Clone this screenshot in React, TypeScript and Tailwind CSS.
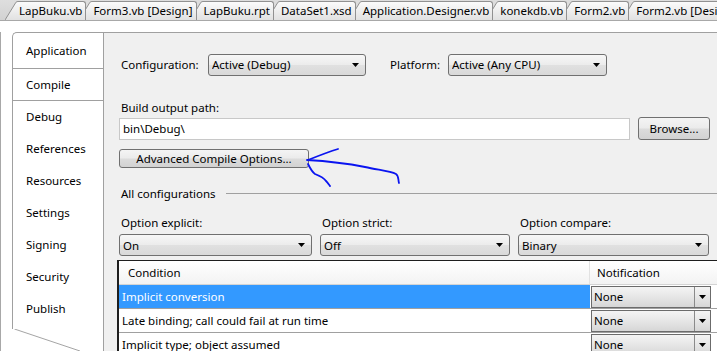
import React from 'react';

const docTabs = [
  'LapBuku.vb',
  'Form3.vb [Design]',
  'LapBuku.rpt',
  'DataSet1.xsd',
  'Application.Designer.vb',
  'konekdb.vb',
  'Form2.vb',
  'Form2.vb [Design]',
];

const sideTabs = ['Debug', 'References', 'Resources', 'Settings', 'Signing', 'Security', 'Publish'];

const rows = [
  { condition: 'Implicit conversion', selected: true },
  { condition: 'Late binding; call could fail at run time', selected: false },
  { condition: 'Implicit type; object assumed', selected: false },
];

function Arrow() {
  return (
    <svg width="7" height="4" viewBox="0 0 7 4" className="shrink-0">
      <path d="M0 0 H7 L3.5 4 Z" fill="#000" />
    </svg>
  );
}

function DocTab({ label, index }: { label: string; index: number }) {
  return (
    <div
      className={`relative flex h-[19px] shrink-0 ${index === 0 ? 'ml-[5px]' : '-ml-[7px]'}`}
      style={{ zIndex: 20 - index }}
    >
      <svg width="13" height="19" viewBox="0 0 13 19" className="shrink-0">
        <defs>
          <linearGradient id={`tg${index}`} x1="0" y1="0" x2="0" y2="1">
            <stop offset="0" stopColor="#fbfbfb" />
            <stop offset="1" stopColor="#e1e1e1" />
          </linearGradient>
        </defs>
        <path d="M0 19 L11 1.2 Q11.8 0.5 13 0.5 V19 Z" fill={`url(#tg${index})`} />
        <path d="M0 19 L11 1.2 Q11.8 0.5 13 0.5" fill="none" stroke="#919191" />
      </svg>
      <div className="flex items-center pl-[1px] pr-[3px] border-t border-r border-[#919191] rounded-tr-[3px] bg-[linear-gradient(#fbfbfb,#e1e1e1)] text-[11.5px] text-black whitespace-nowrap">
        {label}
      </div>
    </div>
  );
}

function Combo({ value, className }: { value: string; className: string }) {
  return (
    <div
      className={`flex items-center h-[22px] pl-[3px] pr-[6px] border border-[#707070] rounded-[3px] bg-[linear-gradient(#f7f7f7,#ececec_48%,#e0e0e0_52%,#d9d9d9)] ${className}`}
    >
      <span className="flex-1 truncate">{value}</span>
      <Arrow />
    </div>
  );
}

function Button({ label, className }: { label: string; className: string }) {
  return (
    <div
      className={`flex items-center justify-center border border-[#707070] rounded-[3px] bg-[linear-gradient(#f4f4f4,#ebebeb_48%,#dcdcdc_52%,#d2d2d2)] ${className}`}
    >
      {label}
    </div>
  );
}

function GridCombo() {
  return (
    <div className="flex h-[22px] w-[120px] ml-[1px] mt-[1px] border border-[#6b6b6b] bg-[linear-gradient(#f4f4f4,#e6e6e6_50%,#d6d6d6)]">
      <span className="flex-1 pl-[2px] leading-[20px] text-black">None</span>
      <div className="flex w-[16px] items-center justify-center border-l border-[#8a8a8a]">
        <Arrow />
      </div>
    </div>
  );
}

export default function App() {
  return (
    <div className="relative w-[717px] h-[351px] overflow-hidden bg-white text-[11.5px] text-black [font-family:'Noto_Sans','Segoe_UI',sans-serif]">
      {/* Document tabs */}
      <div className="flex items-end h-[21px] pt-[2px] bg-[linear-gradient(#dedede,#d2d2d2)] border-b border-[#a8a8a8]">
        {docTabs.map((t, i) => (
          <DocTab key={t} label={t} index={i} />
        ))}
      </div>
      <div className="h-[11px]" />

      <div className="flex h-[319px] border-l border-[#a8a8a8]">
        {/* Vertical page tabs */}
        <div className="flex flex-col w-[102px] pl-[11px]">
          <div className="flex flex-col border-l border-t border-[#a0a0a0] rounded-tl-[5px]">
            <div className="flex items-center h-[36px] pl-[13px] border-b border-[#a0a0a0]">Application</div>
            <div className="flex items-center h-[32px] pl-[13px] border-b border-[#a0a0a0]">Compile</div>
            {sideTabs.map((t) => (
              <div key={t} className="flex items-center h-[32px] pl-[13px] pb-[1px]">
                {t}
              </div>
            ))}
            <div className="h-[4px]" />
          </div>
          <svg width="91" height="23" viewBox="0 0 91 23" className="-ml-[0.5px]">
            <path d="M0.5 0 L69 23" stroke="#a0a0a0" fill="none" />
          </svg>
        </div>

        {/* Compile page */}
        <div className="flex-1 flex flex-col pl-[15px] pr-[7px] bg-[#f0f0f0] border-l border-t border-[#a0a0a0]">
          <div className="flex items-center mt-[21px]">
            <span className="w-[89px] pl-[2px]">Configuration:</span>
            <Combo value="Active (Debug)" className="w-[158px]" />
            <span className="w-[58px] ml-[24px]">Platform:</span>
            <Combo value="Active (Any CPU)" className="w-[159px]" />
          </div>

          <div className="h-px mt-[16px] -mr-[7px] bg-[#a0a0a0]" />

          <div className="mt-[7px] pl-[2px] leading-[17px]">Build output path:</div>
          <div className="flex items-center gap-[8px] mt-[1px]">
            <div className="flex items-center flex-1 h-[22px] pl-[3px] bg-white border border-[#c8c8c8]">bin\Debug\</div>
            <Button label="Browse..." className="w-[72px] h-[23px]" />
          </div>

          <Button label="Advanced Compile Options..." className="w-[190px] h-[22px] mt-[9px]" />

          <div className="flex items-center mt-[17px] -mr-[7px] h-[17px]">
            <span className="pl-[2px] pr-[10px]">All configurations</span>
            <div className="flex-1 h-px bg-[#a0a0a0]" />
          </div>

          <div className="grid grid-cols-[193px_190px_191px] gap-x-[8px] mt-[12px]">
            <span className="pl-[2px] leading-[17px]">Option explicit:</span>
            <span className="pl-[2px] leading-[17px]">Option strict:</span>
            <span className="pl-[2px] leading-[17px]">Option compare:</span>
            <Combo value="On" className="mt-[3px]" />
            <Combo value="Off" className="mt-[3px]" />
            <Combo value="Binary" className="mt-[3px]" />
          </div>

          {/* Warning grid */}
          <div className="flex flex-col mt-[4px] -ml-[2px] -mr-[7px] flex-1 bg-white border-l-2 border-t border-[#1e1e1e]">
            <div className="flex h-[24px] bg-[linear-gradient(#ffffff,#f3f3f3)] border-b border-[#d4d4d4]">
              <div className="flex items-center w-[471px] pl-[9px] border-r border-[#e2e2e2]">Condition</div>
              <div className="flex items-center pl-[7px]">Notification</div>
            </div>
            {rows.map((r) => (
              <div key={r.condition} className="flex h-[24px] border-b border-[#a0a0a0]">
                <div
                  className={`flex items-center w-[471px] pl-[3px] pb-[1px] ${
                    r.selected ? 'bg-[#3399ff] text-white' : 'bg-white text-black'
                  }`}
                >
                  {r.condition}
                </div>
                <GridCombo />
              </div>
            ))}
          </div>
        </div>
      </div>

      {/* Hand-drawn annotation */}
      <svg
        width="717"
        height="351"
        viewBox="0 0 717 351"
        className="absolute left-0 top-0 pointer-events-none"
      >
        <g fill="none" stroke="#0a14f0" strokeWidth="1.8" strokeLinecap="round" strokeLinejoin="round">
          <path d="M308 160 C318 156 328 152 338 149" />
          <path d="M307 160 C325 161 345 163 365 167 C378 170 390 171 396 174 C399 176 398 180 399 183" />
          <path d="M308 164 C310 168 312 172 315 174 C320 176 324 178 326 181 C328 183 329 185 330 186" />
        </g>
      </svg>
    </div>
  );
}
